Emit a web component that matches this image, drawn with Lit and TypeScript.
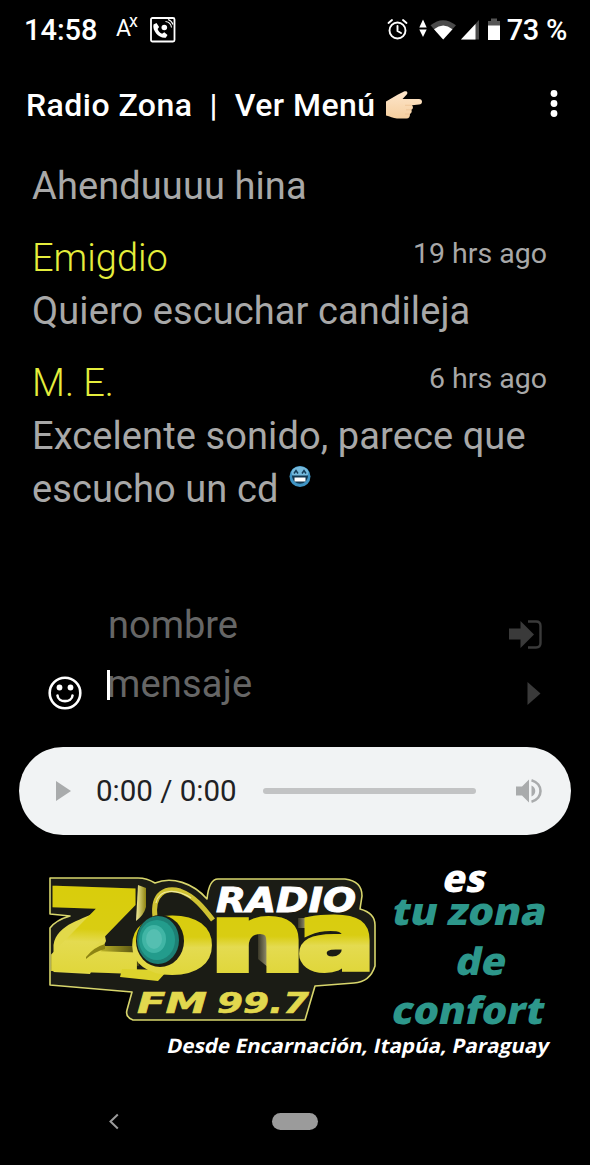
import { LitElement, css, html, svg, nothing } from 'lit';
import { customElement, property } from 'lit/decorators.js';

interface Post {
  name?: string;
  ago?: string;
  lines: string[];
  emoji?: boolean;
}

const POSTS: Post[] = [
  { lines: ['Ahenduuuu hina'] },
  { name: 'Emigdio', ago: '19 hrs ago', lines: ['Quiero escuchar candileja'] },
  {
    name: 'M. E.',
    ago: '6 hrs ago',
    lines: ['Excelente sonido, parece que', 'escucho un cd'],
    emoji: true,
  },
];

@customElement('status-bar')
export class StatusBarEl extends LitElement {
  static override styles = css`
    :host {
      display: flex;
      align-items: center;
      height: 60px;
      padding: 0 23px 0 24px;
      box-sizing: border-box;
      color: #fff;
      font-size: 29px;
      font-weight: 500;
    }
    svg {
      display: block;
      flex: none;
    }
    .time {
      width: 92px;
    }
    .font-size {
      font-size: 23px;
      font-weight: 400;
      width: 34px;
      line-height: 24px;
      margin-top: -2px;
    }
    sup {
      font-size: 18px;
      line-height: 0;
      margin-left: -2px;
    }
    .icons {
      margin-left: auto;
    }
    .battery {
      margin-left: 5px;
      letter-spacing: -0.3px;
    }
  `;

  override render() {
    return html`
      <span class="time">14:58</span>
      <span class="font-size">A<sup>x</sup></span>
      <svg width="26" height="26" viewBox="0 0 26 26" fill="none" stroke="#fff">
        <rect x="1" y="1" width="23.5" height="23.5" rx="1.5" stroke-width="1.8" />
        <path
          d="M3.500 7.500 6.500 6l2.600 4-1.500 2c1 2.600 2.300 3.900 4.500 4.800l2.200-1.600 3.200 2.800-1.700 2.700C9.500 22 2 14 3.500 7.500z"
          fill="#fff"
          stroke="none"
        />
        <circle cx="14.300" cy="10.500" r="2.800" fill="#fff" stroke="none" />
        <path d="M15.500 4.500a7 7 0 0 1 6 6M18 2.500a8 8 0 0 1 5 5" stroke-width="1.100" />
      </svg>
      <svg class="icons" width="115" height="24" viewBox="0 0 115 24">
        <g fill="none" stroke="#fff" stroke-width="1.900" stroke-linecap="round">
          <circle cx="10.500" cy="12.500" r="8" />
          <path d="M10.500 8v5l3.500 2M1.500 5l3.500-3M19.500 5 16 2" />
        </g>
        <path d="M32.300 9.500 36 1.500l3.700 8zM32.300 11.500h7.400L36 19z" fill="#fff" />
        <path d="M43.500 7.300Q56 -3 69 7.300L56.200 21.500z" fill="#4a4a4a" />
        <path d="M47 11.200Q56.200 4 65.500 11.200L56.200 21.500z" fill="#fff" />
        <path d="M92 2v19.500H74z" fill="#4a4a4a" />
        <path d="M88.500 6v15.500H74z" fill="#fff" />
        <path d="M101 3h3V.5h6V3h3v5h-12z" fill="#555" />
        <path d="M101 7.500h12V22h-12z" fill="#fff" />
      </svg>
      <span class="battery">73 %</span>
    `;
  }
}

@customElement('app-header')
export class AppHeaderEl extends LitElement {
  static override styles = css`
    :host {
      display: flex;
      align-items: center;
      height: 90px;
      padding: 0 31px 0 26px;
      box-sizing: border-box;
      color: #fff;
      font-size: 32px;
      font-weight: 500;
      letter-spacing: 0.45px;
    }
    .title {
      display: flex;
      gap: 17px;
    }
    .hand {
      margin-left: 9px;
    }
    .menu {
      margin-left: auto;
    }
  `;

  override render() {
    return html`
      <div class="title"><span>Radio Zona</span><span>|</span><span>Ver Menú</span></div>
      <svg class="hand" width="38" height="30" viewBox="0 0 38 30">
        <defs>
          <linearGradient id="skin" x1="0" y1="0" x2="0" y2="1">
            <stop offset="0" stop-color="#fde6cc" />
            <stop offset="1" stop-color="#f6cf9f" />
          </linearGradient>
        </defs>
        <path
          d="M1 11.500 13 4.500 19 1.500c3-1.300 4.500 1.200 2.500 3.200L17.500 9H34c4 0 4 5.500 0 5.500l-7 .8c1.500 1.500 1.200 3.800-.6 4.500.8 1.500.1 3.600-1.500 4.200.3 2.500-.9 4.500-3.400 4.500H12C8 28.500 5 26 1 25.500z"
          fill="url(#skin)"
        />
        <path d="M20 15.300h7M21 19.800h5M20 24h5" stroke="#ecc294" stroke-width="0.800" fill="none" />
      </svg>
      <svg class="menu" width="10" height="30" viewBox="0 0 10 30" fill="#fff">
        <circle cx="5" cy="3.500" r="3.400" />
        <circle cx="5" cy="13.500" r="3.400" />
        <circle cx="5" cy="23.500" r="3.400" />
      </svg>
    `;
  }
}

@customElement('chat-post')
export class ChatPostEl extends LitElement {
  @property({ attribute: false })
  post!: Post;

  static override styles = css`
    :host {
      display: block;
      color: #a8a8a8;
      font-size: 38px;
      line-height: 53px;
    }
    .head {
      display: flex;
      justify-content: space-between;
    }
    .name {
      color: #e5ee3c;
      font-weight: 300;
    }
    .ago {
      font-size: 28.5px;
      line-height: 44px;
    }
    .line {
      display: flex;
      gap: 10px;
      letter-spacing: 0.1px;
      white-space: nowrap;
    }
    .emoji {
      margin-top: 2px;
    }
  `;

  private renderEmoji() {
    return html`
      <svg class="emoji" width="22" height="23" viewBox="0 0 22 23">
        <circle cx="11" cy="11.500" r="10.500" fill="#3f94c4" />
        <ellipse cx="11" cy="7.500" rx="8.500" ry="6" fill="#74b9dc" />
        <path d="M5 8.500 7 5.500 9 8.500M13 8.500l2-3 2 3" fill="none" stroke="#143c58" stroke-width="1.500" />
        <path d="M3 10.500h16c-.5 11-15.500 11-16 0z" fill="#123750" />
        <path d="M5.500 12.500h11v4h-11z" fill="#fff" />
      </svg>
    `;
  }

  override render() {
    const { name, ago, lines, emoji } = this.post;
    return html`
      ${name
        ? html`<div class="head"><span class="name">${name}</span><span class="ago">${ago}</span></div>`
        : nothing}
      ${lines.map(
        (line, i) => html`
          <div class="line">
            <span>${line}</span>${emoji && i === lines.length - 1 ? this.renderEmoji() : nothing}
          </div>
        `,
      )}
    `;
  }
}

@customElement('chat-form')
export class ChatFormEl extends LitElement {
  static override styles = css`
    :host {
      display: grid;
      grid-template-columns: 60px 1fr 34px;
      grid-template-rows: 59px 59px;
      padding: 0 47px 0 48px;
      color: #666;
      font-size: 38px;
      line-height: 53px;
    }
    .smile {
      grid-row: 2;
      margin-top: 18px;
    }
    .field {
      grid-column: 2;
      display: flex;
      align-items: flex-start;
    }
    .caret {
      width: 3px;
      height: 30px;
      margin: 12px -3px 0 -1px;
      background: #fff;
      z-index: 1;
    }
    .message {
      letter-spacing: 0.2px;
    }
    .icon {
      grid-column: 3;
      margin-top: 20px;
    }
  `;

  override render() {
    return html`
      <div class="field">nombre</div>
      <svg class="icon" width="34" height="32" viewBox="0 0 34 32">
        <path d="M0 9.500h11.500V2l13.500 13.500L11.500 29v-8.500H0z" fill="#3a3a3a" />
        <path
          d="M19 2.500h8q4.500 0 4.500 4.500v17q0 4.500-4.500 4.500h-8"
          fill="none"
          stroke="#3a3a3a"
          stroke-width="2.400"
        />
      </svg>
      <svg class="smile" width="34" height="34" viewBox="0 0 34 34">
        <circle cx="17" cy="17" r="15.300" fill="none" stroke="#fff" stroke-width="2.600" />
        <circle cx="11.500" cy="11.500" r="2.900" fill="#fff" />
        <circle cx="22.500" cy="11.500" r="2.900" fill="#fff" />
        <path
          d="M9.500 19.500c.5 7.500 14.500 7.500 15 0"
          fill="none"
          stroke="#fff"
          stroke-width="2.600"
          stroke-linecap="round"
        />
      </svg>
      <div class="field message"><span class="caret"></span>mensaje</div>
      <svg class="icon" width="34" height="32" viewBox="0 0 34 32">
        <path d="M18.500 4 31.500 15.500 18.500 27z" fill="#3a3a3a" />
      </svg>
    `;
  }
}

@customElement('audio-player')
export class AudioPlayerEl extends LitElement {
  static override styles = css`
    :host {
      display: flex;
      align-items: center;
      height: 88px;
      margin: 0 19px;
      padding: 0 29px 0 37px;
      box-sizing: border-box;
      border-radius: 44px;
      background: #f1f3f4;
      color: #202124;
      font-size: 29.5px;
    }
    svg {
      flex: none;
    }
    .time {
      width: 167px;
      margin-left: 25px;
      white-space: nowrap;
    }
    .track {
      flex: 1;
      height: 6px;
      border-radius: 3px;
      background: #c2c3c4;
    }
    .volume {
      margin-left: 39px;
    }
  `;

  override render() {
    return html`
      <svg width="15" height="20" viewBox="0 0 15 20"><path d="M0 0 15 10 0 20z" fill="#a9abac" /></svg>
      <span class="time">0:00 / 0:00</span>
      <div class="track"></div>
      <svg class="volume" width="27" height="26" viewBox="0 0 27 26" fill="#a9abac">
        <path d="M1 8.500h6L14 1.500v23L7 17.500H1z" />
        <path d="M16.500 7.500c5 2 5 9 0 11z" />
        <path d="M16.500 2.300c12 3.500 12 18 0 21.400" fill="none" stroke="#a9abac" stroke-width="2.600" />
      </svg>
    `;
  }
}

@customElement('station-banner')
export class StationBannerEl extends LitElement {
  static override styles = css`
    :host {
      display: block;
      padding-left: 40px;
    }
    svg {
      display: block;
    }
    .letter {
      font-family: 'DejaVu Sans', sans-serif;
      font-weight: 700;
      fill: url(#gold);
      stroke: url(#gold);
      stroke-width: 6px;
    }
    .plate {
      font-family: 'DejaVu Sans', sans-serif;
      font-weight: 700;
      font-style: italic;
    }
    .slogan {
      font-family: 'Open Sans', sans-serif;
      font-weight: 800;
      fill: #2d978b;
    }
    .place {
      font-weight: 700;
    }
    .white {
      fill: #fff;
    }
  `;

  private renderLogo() {
    return svg`
      <defs>
        <linearGradient id="gold" x1="0" y1="0" x2="0" y2="1">
          <stop offset="0" stop-color="#d9cd08" />
          <stop offset="0.480" stop-color="#d9cd12" />
          <stop offset="0.580" stop-color="#e4db50" />
          <stop offset="1" stop-color="#ddd32c" />
        </linearGradient>
        <linearGradient id="fold">
          <stop offset="0" stop-color="#e6dc30" />
          <stop offset="1" stop-color="#4c4710" />
        </linearGradient>
        <linearGradient id="side">
          <stop offset="0" stop-color="#f2ed9a" />
          <stop offset="1" stop-color="#8f8410" />
        </linearGradient>
        <linearGradient id="inner">
          <stop offset="0" stop-color="#3a3828" />
          <stop offset="1" stop-color="#d8d2a0" />
        </linearGradient>
      </defs>
      <path
        d="M10 13H98Q107 13 115 18C132 11 153 18 167 34Q169 14 178 14H305Q322 16 322 31L320 44Q335 48 335 60V101Q330 117 314 118L275 121 265 155H93Q85 152 87 145L92 127 10 120V63Q16 55 30 51L10 49Z"
        fill="#1b1c15"
        stroke="#d8d66c"
        stroke-width="1.600"
        stroke-linejoin="round"
      />
      <path d="M56 81H99V101L46 97z" fill="url(#fold)" />
      <path d="M60 45C44 55 17 58 13.500 80V107L50 109 66 76z" fill="#e2d94a" />
      <text class="letter" transform="matrix(1.140 0.040 0 1 9 103)" font-size="109">Z</text>
      <path d="M98 20 106 23V42Q104 50 96 56z" fill="url(#side)" />
      <path d="M46 92Q54 82 65 79V84Q54 87 46 94z" fill="#8d8412" />
      <path d="M82 104 128 105 118 116 80 112z" fill="#ddd32c" />
      <text class="letter" transform="matrix(1.300 0 0 1 91 106)" font-size="92">o</text>
      <path
        d="M115 52C112 28 126 22 140 26 154 31 163 42 173 55"
        fill="none"
        stroke="#cfc232"
        stroke-width="5"
      />
      <path d="M116 38C119 23 137 24 151 33" fill="none" stroke="#f0eaa0" stroke-width="1.200" />
      <ellipse cx="120" cy="76" rx="24" ry="26" fill="#1b1c15" />
      <ellipse cx="118" cy="75" rx="21" ry="24" fill="#1d8074" />
      <ellipse cx="117" cy="75" rx="18" ry="20" fill="#239c8c" />
      <ellipse cx="114" cy="74" rx="12" ry="14" fill="#40b5a5" />
      <ellipse cx="114" cy="74" rx="8" ry="10" fill="#55bfb1" />
      <path d="M218 67H234V107L218 94z" fill="url(#inner)" />
      <text class="letter" transform="matrix(1.460 0 0 1 170 105)" font-size="91">n</text>
      <path d="M258 53H271V63H258z" fill="url(#inner)" />
      <text class="letter" transform="matrix(1.250 0 0 1 258 104)" font-size="91">a</text>
      <text class="plate white" x="176" y="46.500" font-size="34" textLength="140" lengthAdjust="spacingAndGlyphs" stroke="#fff">RADIO</text>
      <text class="plate" x="97" y="147.500" font-size="28" textLength="70" lengthAdjust="spacingAndGlyphs" fill="#e2d84e" stroke="#e2d84e" stroke-width="0.600">FM</text>
      <text class="plate" x="177" y="147.500" font-size="28" textLength="92" lengthAdjust="spacingAndGlyphs" fill="#e2d84e" stroke="#e2d84e" stroke-width="0.600">99.7</text>
    `;
  }

  private renderSlogan(text: string, x: number, y: number, width: number, size = 38) {
    return svg`
      <text
        transform="translate(${x} ${y}) skewX(-12)"
        font-size=${size}
        textLength=${width}
        lengthAdjust="spacingAndGlyphs"
      >${text}</text>
    `;
  }

  override render() {
    return html`
      <svg width="520" height="216" viewBox="0 -16 520 216">
        ${this.renderLogo()}
        <g class="slogan">
          <g class="white">${this.renderSlogan('es', 401, 27, 43)}</g>
          ${this.renderSlogan('tu zona', 350, 60, 154)}
          ${this.renderSlogan('de', 414, 110, 50)}
          ${this.renderSlogan('confort', 350, 159, 152)}
          <g class="white place">
            ${this.renderSlogan('Desde Encarnación, Itapúa, Paraguay', 126, 188, 382, 20)}
          </g>
        </g>
      </svg>
    `;
  }
}

@customElement('app-root')
export class AppRootEl extends LitElement {
  static override styles = css`
    :host {
      display: flex;
      flex-direction: column;
      height: 1165px;
      overflow: hidden;
      background: #000;
      font-family: Roboto, sans-serif;
    }
    .chat {
      display: flex;
      flex-direction: column;
      gap: 19px;
      height: 438px;
      padding: 10px 43px 0 32px;
      box-sizing: border-box;
    }
    chat-form {
      padding-top: 11px;
    }
    audio-player {
      margin-top: 30px;
    }
    station-banner {
      margin-top: 14px;
    }
    .nav {
      display: grid;
      grid-template-columns: 163px 46px;
      align-items: center;
      margin: 48px 0 0 109px;
    }
    .home {
      height: 17px;
      border-radius: 9px;
      background: #9b9b9b;
    }
  `;

  override render() {
    return html`
      <status-bar></status-bar>
      <app-header></app-header>
      <div class="chat">${POSTS.map((p) => html`<chat-post .post=${p}></chat-post>`)}</div>
      <chat-form></chat-form>
      <audio-player></audio-player>
      <station-banner></station-banner>
      <div class="nav">
        <svg width="10" height="17" viewBox="0 0 10 17">
          <path d="M8.800 1.500 1.500 8.500 8.800 15.500" fill="none" stroke="#9b9b9b" stroke-width="2" />
        </svg>
        <div class="home"></div>
      </div>
    `;
  }
}

declare global {
  interface HTMLElementTagNameMap {
    'app-root': AppRootEl;
  }
}
